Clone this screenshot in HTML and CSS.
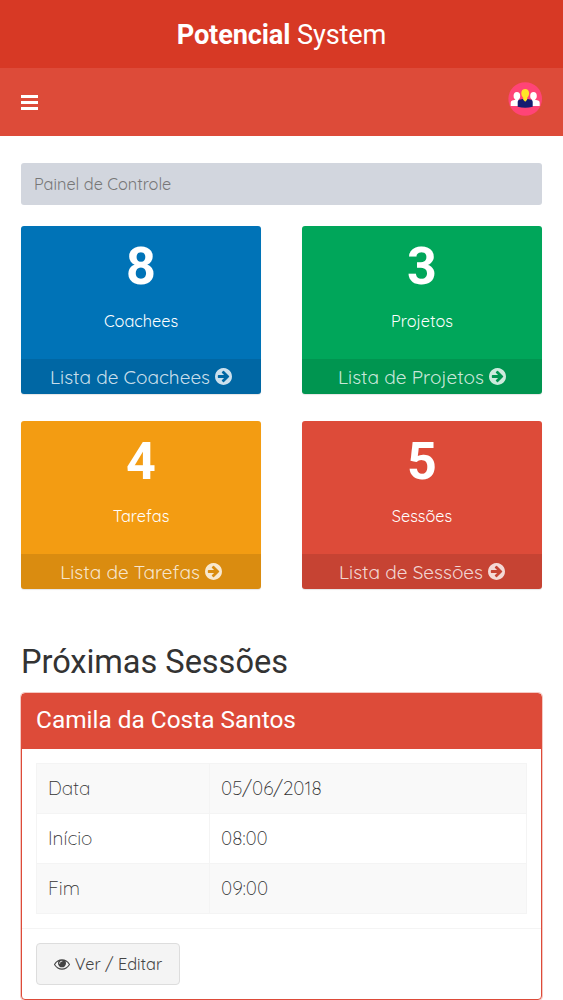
FILE: index.html
```html
<!DOCTYPE html>
<html lang="pt-br">
<head>
  <meta charset="UTF-8">
  <meta name="viewport" content="width=device-width, initial-scale=1.0">
  <title>Potencial System</title>
  <link rel="stylesheet" href="styles.css">
</head>
<body>

  <svg width="0" height="0" class="icon-defs">
    <defs>
      <symbol id="arrow" viewBox="128 128 1536 1536">
        <path d="M1413 896q0-27-18-45l-91-91-362-362q-18-18-45-18t-45 18l-91 91q-18 18-18 45t18 45l189 189h-502q-26 0-45 19t-19 45v128q0 26 19 45t45 19h502l-189 189q-19 19-19 45t19 45l91 91q18 18 45 18t45-18l362-362 91-91q18-18 18-45zm251 0q0 209-103 385.5t-279.5 279.5-385.5 103-385.5-103-279.5-279.5-103-385.5 103-385.5 279.5-279.5 385.5-103 385.5 103 279.5 279.5 103 385.5z"/>
      </symbol>
    </defs>
  </svg>

  <header class="main-header">
    <a class="logo"><b>Potencial</b> System</a>
    <nav class="navbar">
      <a class="sidebar-toggle">
        <svg width="17" height="15" viewBox="0 0 17 15">
          <path d="M0 0h17v3H0zM0 6h17v3H0zM0 12h17v3H0z" fill="#fff"/>
        </svg>
      </a>
      <a class="user-menu">
        <svg width="34" height="34" viewBox="0 0 34 34">
          <circle cx="17.2" cy="17" r="16.8" fill="#ff4477"/>
          <g fill="#fff">
            <ellipse cx="8.900" cy="13.900" rx="3.300" ry="3.800"/>
            <ellipse cx="25.500" cy="13.900" rx="3.300" ry="3.800"/>
            <path d="M7.300 16h3.200v2.500l3 1V24H2.700v-3.300q0-1.700 1.600-2.200l3-.8zM27.100 16h-3.200v2.500l-3 1V24h10.800v-3.300q0-1.700-1.600-2.200l-3-.8z"/>
          </g>
          <path d="M9.700 24.700v-5q0-1.600 1.600-2L14.500 17h5.400l3.200.7q1.600.4 1.600 2v5Q17.200 26.600 9.700 24.700z" fill="#141c70"/>
          <path d="M17.200 7c2.300 0 3.900 1.600 3.900 4.100 0 2-.7 3.500-1.900 4.700v2l-2 2-2-2v-2c-1.200-1.200-1.900-2.700-1.900-4.700C13.300 8.600 14.900 7 17.200 7z" fill="#ffe527"/>
        </svg>
      </a>
    </nav>
  </header>

  <main class="content">
    <ol class="breadcrumb">
      <li>Painel de Controle</li>
    </ol>

    <div class="row">
      <div class="small-box bg-blue">
        <div class="inner">
          <h3>8</h3>
          <p>Coachees</p>
        </div>
        <a class="small-box-footer">Lista de Coachees <svg class="icon"><use href="#arrow"/></svg></a>
      </div>
      <div class="small-box bg-green">
        <div class="inner">
          <h3>3</h3>
          <p>Projetos</p>
        </div>
        <a class="small-box-footer">Lista de Projetos <svg class="icon"><use href="#arrow"/></svg></a>
      </div>
      <div class="small-box bg-yellow">
        <div class="inner">
          <h3>4</h3>
          <p>Tarefas</p>
        </div>
        <a class="small-box-footer">Lista de Tarefas <svg class="icon"><use href="#arrow"/></svg></a>
      </div>
      <div class="small-box bg-red">
        <div class="inner">
          <h3>5</h3>
          <p>Sessões</p>
        </div>
        <a class="small-box-footer">Lista de Sessões <svg class="icon"><use href="#arrow"/></svg></a>
      </div>
    </div>

    <h2 class="page-title">Próximas Sessões</h2>

    <div class="box">
      <div class="box-header">
        <h3 class="box-title">Camila da Costa Santos</h3>
      </div>
      <div class="box-body">
        <table class="table">
          <tr><td>Data</td><td>05/06/2018</td></tr>
          <tr><td>Início</td><td>08:00</td></tr>
          <tr><td>Fim</td><td>09:00</td></tr>
        </table>
      </div>
      <div class="box-footer">
        <a class="btn">
          <svg class="eye" viewBox="0 384 1792 1152">
            <path d="M1664 960q-152-236-381-353 61 104 61 225 0 185-131.500 316.500t-316.500 131.500-316.500-131.500-131.500-316.500q0-121 61-225-229 117-381 353 133 205 333.500 326.500t434.500 121.500 434.500-121.500 333.500-326.500zm-720-384q0-20-14-34t-34-14q-125 0-214.500 89.500t-89.500 214.500q0 20 14 34t34 14 34-14 14-34q0-86 61-147t147-61q20 0 34-14t14-34zm848 384q0 34-20 69-140 230-376.500 368.500t-499.500 138.500-499.500-139-376.500-368q-20-35-20-69t20-69q140-229 376.500-368t499.500-139 499.500 139 376.500 368q20 35 20 69z"/>
          </svg>
          <span>Ver / Editar</span>
        </a>
      </div>
    </div>
  </main>

</body>
</html>
```
FILE: styles.css
```css
* {
  box-sizing: border-box;
}

body {
  margin: 0;
  background: #fff;
  color: #333;
  font-family: Quicksand, Lato, sans-serif;
  font-size: 19px;
  overflow: hidden;
}

h2, h3, p, ol {
  margin: 0;
  padding: 0;
}

.icon-defs {
  position: absolute;
}

.logo {
  display: block;
  height: 68px;
  line-height: 70px;
  background: #d73925;
  color: #fff;
  font-family: Roboto, sans-serif;
  font-size: 27.2px;
  letter-spacing: -0.14px;
  text-align: center;
}

.navbar {
  display: flex;
  justify-content: space-between;
  height: 68px;
  padding: 14px 21px 0 20px;
  background: #dd4b39;
}

.sidebar-toggle svg {
  display: block;
  margin: 13px 0 0 0.5px;
}

.user-menu svg {
  display: block;
}

.content {
  padding: 27px 21px 0;
}

.breadcrumb {
  height: 42px;
  padding-left: 13px;
  line-height: 43px;
  background: #d2d6de;
  border-radius: 3px;
  color: #777;
  font-size: 16.3px;
  list-style: none;
}

.row {
  display: grid;
  grid-template-columns: 240px 240px;
  column-gap: 41px;
  row-gap: 27px;
  margin-top: 21px;
}

.small-box {
  height: 168px;
  border-radius: 3px;
  box-shadow: 0 1px 1px rgba(0, 0, 0, 0.1);
  color: #fff;
  text-align: center;
  overflow: hidden;
}

.inner {
  height: 133px;
  padding-top: 12px;
}

.inner h3 {
  font-family: Roboto, sans-serif;
  font-size: 52px;
  line-height: 57px;
  font-weight: bold;
}

.inner p {
  margin-top: 14px;
  font-size: 16.3px;
  line-height: 24px;
}

.small-box-footer {
  display: flex;
  justify-content: center;
  align-items: center;
  gap: 5px;
  height: 35px;
  background: rgba(0, 0, 0, 0.1);
  color: rgba(255, 255, 255, 0.8);
}

.icon {
  width: 17px;
  height: 17px;
  fill: currentColor;
}

.bg-blue { background: #0073b7; }
.bg-green { background: #00a65a; }
.bg-yellow { background: #f39c12; }
.bg-red { background: #dd4b39; }

.page-title {
  margin-top: 54px;
  font-family: Roboto, sans-serif;
  font-size: 32.6px;
  font-weight: 400;
  line-height: 38px;
  letter-spacing: -0.05px;
}

.box {
  margin-top: 12px;
  border: 1px solid #dd4b39;
  border-radius: 4px;
  box-shadow: 0 0 0 1px rgba(221, 75, 57, 0.3);
}

.box-header {
  height: 55px;
  padding: 11px 14px;
  background: #dd4b39;
  color: #fff;
}

.box-title {
  font-family: Roboto, sans-serif;
  font-size: 24.4px;
  font-weight: 400;
  line-height: 29px;
}

.box-body {
  padding: 14px;
}

.table {
  width: 491px;
  border-collapse: collapse;
}

.table td {
  height: 50px;
  padding: 0 11px 2px;
  border: 1px solid #f4f4f4;
  font-weight: 300;
}

.table td:first-child {
  width: 173px;
}

.table tr:nth-child(odd) {
  background: #f9f9f9;
}

.box-footer {
  padding: 14px;
  border-top: 1px solid #f4f4f4;
}

.btn {
  display: flex;
  justify-content: center;
  align-items: center;
  gap: 5px;
  width: 144px;
  height: 42px;
  background: #f4f4f4;
  border: 1px solid #ddd;
  border-radius: 4px;
  color: #444;
  font-size: 16.3px;
}

.eye {
  width: 16px;
  height: 11px;
  fill: #444;
}
```
